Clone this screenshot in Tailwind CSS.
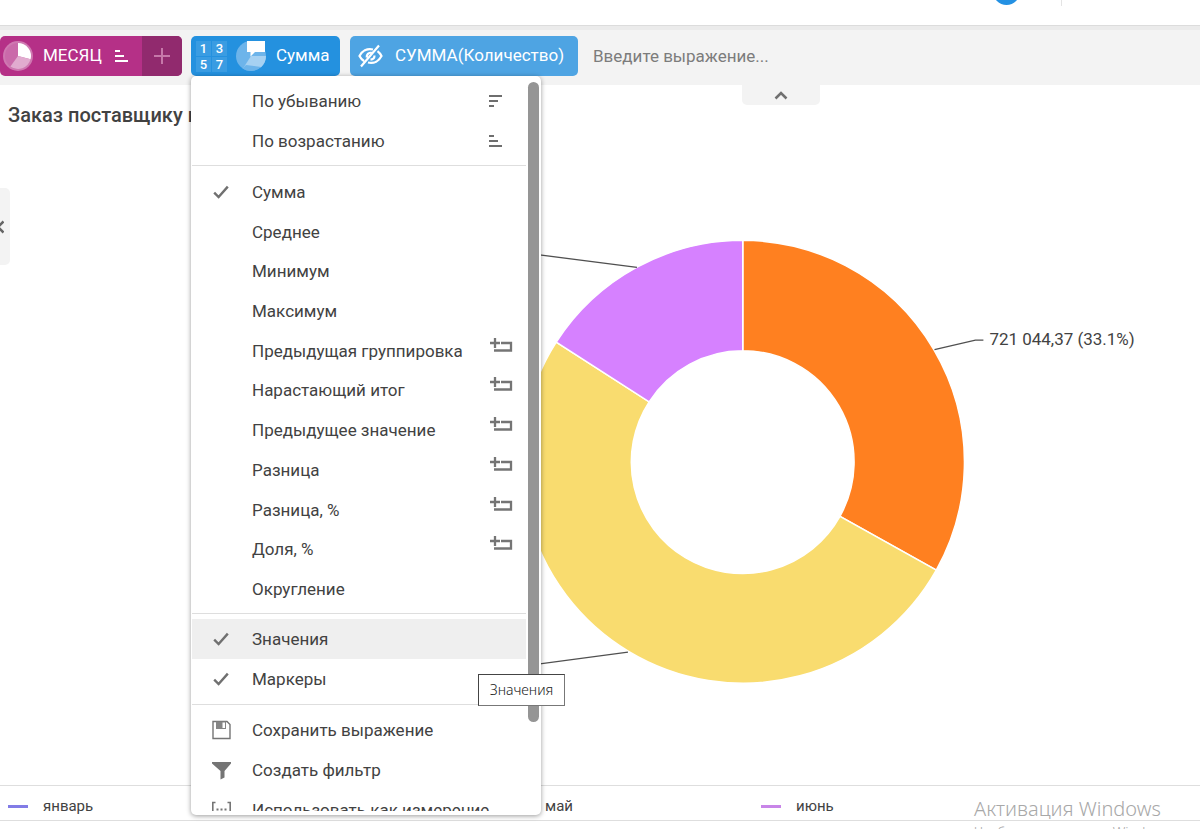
<!DOCTYPE html>
<html lang="ru">
<head>
<meta charset="utf-8">
<meta name="viewport" content="width=device-width, initial-scale=1">
<title>Заказ поставщику</title>
<script src="https://cdn.jsdelivr.net/npm/@tailwindcss/browser@4"></script>
</head>
<body class="flex h-screen flex-col overflow-hidden bg-white font-['Roboto','Noto_Sans',sans-serif] text-[17px] text-[#424242]">

<svg class="hidden" aria-hidden="true">
  <symbol id="check" viewBox="0 0 16 14"><path d="M1.2 7.6 5.6 12 14.8 1.6" fill="none" stroke="#707070" stroke-width="2.4"/></symbol>
  <symbol id="reset" viewBox="0 0 24 16"><path d="M1 6h10M6 1v10M12 6h10v7.5H5" fill="none" stroke="#757575" stroke-width="2.300"/></symbol>
</svg>

<header class="flex h-[25px] shrink-0 justify-end pr-[138px]">
  <div class="flex gap-[41px]">
    <span class="-mt-[22px] size-[27px] rounded-full bg-[#2491e3]"></span>
    <span class="h-1.5 w-px bg-[#e4e4e4]"></span>
  </div>
</header>

<div class="relative z-10 flex h-[60px] shrink-0 items-start gap-2.5 border-t border-[#dcdcdc] bg-[#f3f3f3]">
  <div class="absolute inset-x-0 top-0 h-1 bg-[#ebebeb]"></div>
  <div class="mt-2.5 flex h-10 w-[182px] -mr-px overflow-hidden rounded-[5px] bg-[#b53087] text-white">
    <button class="flex flex-1 items-center pl-0.5">
      <svg class="size-8 shrink-0" viewBox="0 0 32 32"><circle cx="16" cy="16" r="15" fill="#cf78b1"/><circle cx="16" cy="16" r="13" fill="#ca6aaa"/><path d="M16 16V3A13 13 0 0 1 28.600 19.200Z" fill="#fff"/><path d="M16 16 28.600 19.200A13 13 0 0 1 8.400 26.500Z" fill="#e1abcf"/></svg>
      <span class="ml-[9px] w-[60px] text-left">МЕСЯЦ</span>
      <svg class="ml-3 h-4 w-3.5" viewBox="0 0 14 16"><path d="M0 3h5M0 8h9M0 13h13" stroke="#fff" stroke-width="2"/></svg>
    </button>
    <button class="flex w-10 items-center justify-center bg-[#912a6e]" aria-label="Добавить">
      <svg class="size-4" viewBox="0 0 16 16"><path d="M8 0v16M0 8h16" stroke="#c678a9" stroke-width="2"/></svg>
    </button>
  </div>

  <div class="relative mt-2.5 w-[149px]">
    <button class="flex h-10 w-full items-center rounded-[5px] bg-[#2491df] pl-[5px] text-white">
      <span class="grid grid-cols-2 gap-px text-[13px] font-medium leading-[15px]">
        <span class="w-[15px] bg-white/10">1</span><span class="w-[15px] bg-white/10">3</span>
        <span class="w-[15px] bg-white/10">5</span><span class="w-[15px] bg-white/10">7</span>
      </span>
      <svg class="ml-2 size-8 shrink-0" viewBox="0 0 32 32"><circle cx="16" cy="16" r="15" fill="#6db4ea"/><path d="M16 16h15A15 15 0 0 1 26 27.200L8 28.500Z" fill="#a6d1f2"/><path d="M26 27A15 15 0 0 1 7.500 28.500L11 25Z" fill="#6db4ea"/><path d="M12 1h18v11H20l-4.500 4.500V12H12Z" fill="#fff"/></svg>
      <span class="ml-[9px]">Сумма</span>
    </button>

    <!-- Выпадающее меню -->
    <div class="absolute left-0 top-10 flex h-[739px] w-[350px] rounded-[5px] bg-white pb-1 shadow-[0_1px_5px_rgba(0,0,0,0.4)]" role="menu">
      <div class="flex-1 overflow-hidden pl-px leading-5">
        <div class="border-b border-[#dedede] pb-1 pt-[5px]">
          <button class="flex h-10 w-full items-center pl-[60px] pr-[23px]" role="menuitem"><span class="flex-1 text-left">По убыванию</span><svg class="h-4 w-3.5" viewBox="0 0 14 16"><path d="M0 3h13M0 8h9M0 13h5" stroke="#6e6e6e" stroke-width="2"/></svg></button>
          <button class="flex h-10 w-full items-center pl-[60px] pr-[23px]" role="menuitem"><span class="flex-1 text-left">По возрастанию</span><svg class="h-4 w-3.5" viewBox="0 0 14 16"><path d="M0 3h5M0 8h9M0 13h13" stroke="#6e6e6e" stroke-width="2"/></svg></button>
        </div>
        <div class="grid h-[448px] auto-rows-fr border-b border-[#dedede] pb-1 pt-1.5">
          <button class="flex items-center pl-[21px]" role="menuitem"><svg class="mr-[23px] h-3.5 w-4"><use href="#check"/></svg>Сумма</button>
          <button class="flex items-center pl-[60px]" role="menuitem">Среднее</button>
          <button class="flex items-center pl-[60px]" role="menuitem">Минимум</button>
          <button class="flex items-center pl-[60px]" role="menuitem">Максимум</button>
          <button class="flex items-center pl-[60px] pr-[13px]" role="menuitem"><span class="flex-1 text-left">Предыдущая группировка</span><svg class="mb-3 h-4 w-6"><use href="#reset"/></svg></button>
          <button class="flex items-center pl-[60px] pr-[13px]" role="menuitem"><span class="flex-1 text-left">Нарастающий итог</span><svg class="mb-3 h-4 w-6"><use href="#reset"/></svg></button>
          <button class="flex items-center pl-[60px] pr-[13px]" role="menuitem"><span class="flex-1 text-left">Предыдущее значение</span><svg class="mb-3 h-4 w-6"><use href="#reset"/></svg></button>
          <button class="flex items-center pl-[60px] pr-[13px]" role="menuitem"><span class="flex-1 text-left">Разница</span><svg class="mb-3 h-4 w-6"><use href="#reset"/></svg></button>
          <button class="flex items-center pl-[60px] pr-[13px]" role="menuitem"><span class="flex-1 text-left">Разница, %</span><svg class="mb-3 h-4 w-6"><use href="#reset"/></svg></button>
          <button class="flex items-center pl-[60px] pr-[13px]" role="menuitem"><span class="flex-1 text-left">Доля, %</span><svg class="mb-3 h-4 w-6"><use href="#reset"/></svg></button>
          <button class="flex items-center pl-[60px]" role="menuitem">Округление</button>
        </div>
        <div class="border-b border-[#dedede] py-[5px]">
          <button class="flex h-10 w-full items-center bg-[#efefef] pl-[21px]" role="menuitem"><svg class="mr-[23px] h-3.5 w-4"><use href="#check"/></svg>Значения</button>
          <button class="flex h-10 w-full items-center pl-[21px]" role="menuitem"><svg class="mr-[23px] h-3.5 w-4"><use href="#check"/></svg>Маркеры</button>
        </div>
        <div class="pt-[5px]">
          <button class="flex h-10 w-full items-center pl-5" role="menuitem">
            <svg class="mr-5 size-5" viewBox="0 0 20 20"><path d="M1 1.500h14l3 3v14H1Z" fill="none" stroke="#757575" stroke-width="1.400"/><path d="M4 1.500h10V9H4Z" fill="#858585"/><path d="M10.500 2.500h2.500V8h-2.500Z" fill="#fff"/></svg>Сохранить выражение</button>
          <button class="flex h-10 w-full items-center pl-5" role="menuitem">
            <svg class="mr-5 size-5" viewBox="0 0 20 20"><path d="M0 2h19v1.500L12.500 11v6.500l-4 2V11L0 3.500Z" fill="#757575"/></svg>Создать фильтр</button>
          <button class="flex h-10 w-full items-center pl-5" role="menuitem">
            <svg class="mr-5 size-5" viewBox="0 0 20 20"><path d="M3.500 2.500H.8v15h2.700M15.500 2.500h2.700v15h-2.700" fill="none" stroke="#757575" stroke-width="1.600"/><path d="M4.500 8.500h2v2h-2ZM8.500 8.500h2v2h-2ZM12.500 8.500h2v2h-2Z" fill="#757575"/></svg>Использовать как измерение</button>
        </div>
      </div>
      <div class="w-[15px] pl-0.5 pt-1.5"><div class="h-[640px] w-[11px] rounded-full bg-[#959595]"></div></div>
      <div class="absolute left-[287px] top-[598px] flex h-8 w-[87px] items-center justify-center border border-[#777] border-l-[#444] border-t-[#444] bg-white font-['Noto_Sans',sans-serif] text-sm font-light text-[#222]" role="tooltip">Значения</div>
    </div>
  </div>

  <button class="mt-2.5 flex h-10 w-[228px] items-center whitespace-nowrap rounded-[5px] bg-[#4ea4e3] pl-2 text-white">
    <svg class="mr-3 h-6 w-[25px] shrink-0" viewBox="0 0 25 24"><g fill="none" stroke="#fff" stroke-width="2.200"><path d="M15 5.500C9 4 4 7 1.500 12c1 2 2.500 3.700 4.500 5M10 18.500c6 1.500 11-1.500 13.500-6.500-1-2-2.200-3.600-4-4.900M13.500 8.500c-3 0-5 2-4.800 5M16.500 11.500c0 2.500-1.800 4-4 4.200M21 1.500 3 22.500"/></g></svg>
    СУММА(Количество)
  </button>
  <input class="mt-2.5 h-10 min-w-0 flex-1 bg-transparent pl-[5px] placeholder:text-[#7c7c7c] placeholder:opacity-100" placeholder="Введите выражение..." aria-label="Выражение">
  <button class="absolute left-[742px] top-[58px] flex h-[21px] w-[78px] items-center justify-center rounded-b-[5px] bg-[#f3f3f3]" aria-label="Свернуть панель">
    <svg class="h-2.5 w-3.5" viewBox="0 0 14 10"><path d="M1.500 8.500 7 3l5.500 5.500" fill="none" stroke="#707070" stroke-width="2.500"/></svg>
  </button>
</div>

<main class="relative flex min-h-0 flex-1 flex-col">
  <h1 class="h-[60px] pl-2 text-xl font-medium leading-[60px]">Заказ поставщику на</h1>
  <svg class="min-h-0 w-full flex-1" viewBox="0 145 1200 641" role="img" aria-label="Кольцевая диаграмма">
    <g stroke="#fff" stroke-width="1.500">
      <path d="M743 240.500A222 222 0 0 1 936.800 570.800L840.300 516.900A111.500 111.500 0 0 0 743 351Z" fill="#ff8020"/>
      <path d="M936.800 570.800A222 222 0 1 1 556.200 342.500L649.200 402.200A111.500 111.500 0 1 0 840.300 516.900Z" fill="#f9dc6f"/>
      <path d="M556.200 342.500A222 222 0 0 1 743 240.500V351A111.500 111.500 0 0 0 649.200 402.200Z" fill="#d681ff"/>
    </g>
    <path d="M935 350 976 340.500H984M500 250 637 267.500M500 670 628 653" fill="none" stroke="#505050" stroke-width="1.300"/>
    <text x="990" y="345" font-size="17" fill="#424242">721 044,37 (33.1%)</text>
  </svg>
  <button class="absolute left-0 top-[103px] flex h-[77px] w-2.5 items-center overflow-hidden rounded-r-[5px] bg-[#f3f3f3]" aria-label="Показать панель">
    <svg class="h-3.5 w-1 shrink-0" viewBox="0 0 4 14"><path d="M3.500 1.500-2 7l5.500 5.500" fill="none" stroke="#666" stroke-width="2.500"/></svg>
  </button>
</main>

<footer class="relative h-11 shrink-0">
  <ul class="grid h-9 grid-cols-[repeat(4,251px)] items-center border-y border-[#dedede] pl-2 pt-1.5 text-[15px]">
    <li class="flex items-center gap-[15px]"><span class="h-[3px] w-5 bg-[#827ce6]"></span>январь</li>
    <li class="col-start-3 flex items-center gap-[15px]"><span class="h-[3px] w-5 bg-[#f9dc6f]"></span>май</li>
    <li class="flex items-center gap-[15px]"><span class="h-[3px] w-5 bg-[#c885e8]"></span>июнь</li>
  </ul>
  <div class="absolute right-11 top-2.5 w-[182px] whitespace-nowrap font-['Noto_Sans',sans-serif] font-light text-[#a8a8a8]">
    <p class="text-xl leading-7">Активация Windows</p>
    <p class="text-sm leading-5">Чтобы активировать Windows</p>
  </div>
</footer>
</body>
</html>
